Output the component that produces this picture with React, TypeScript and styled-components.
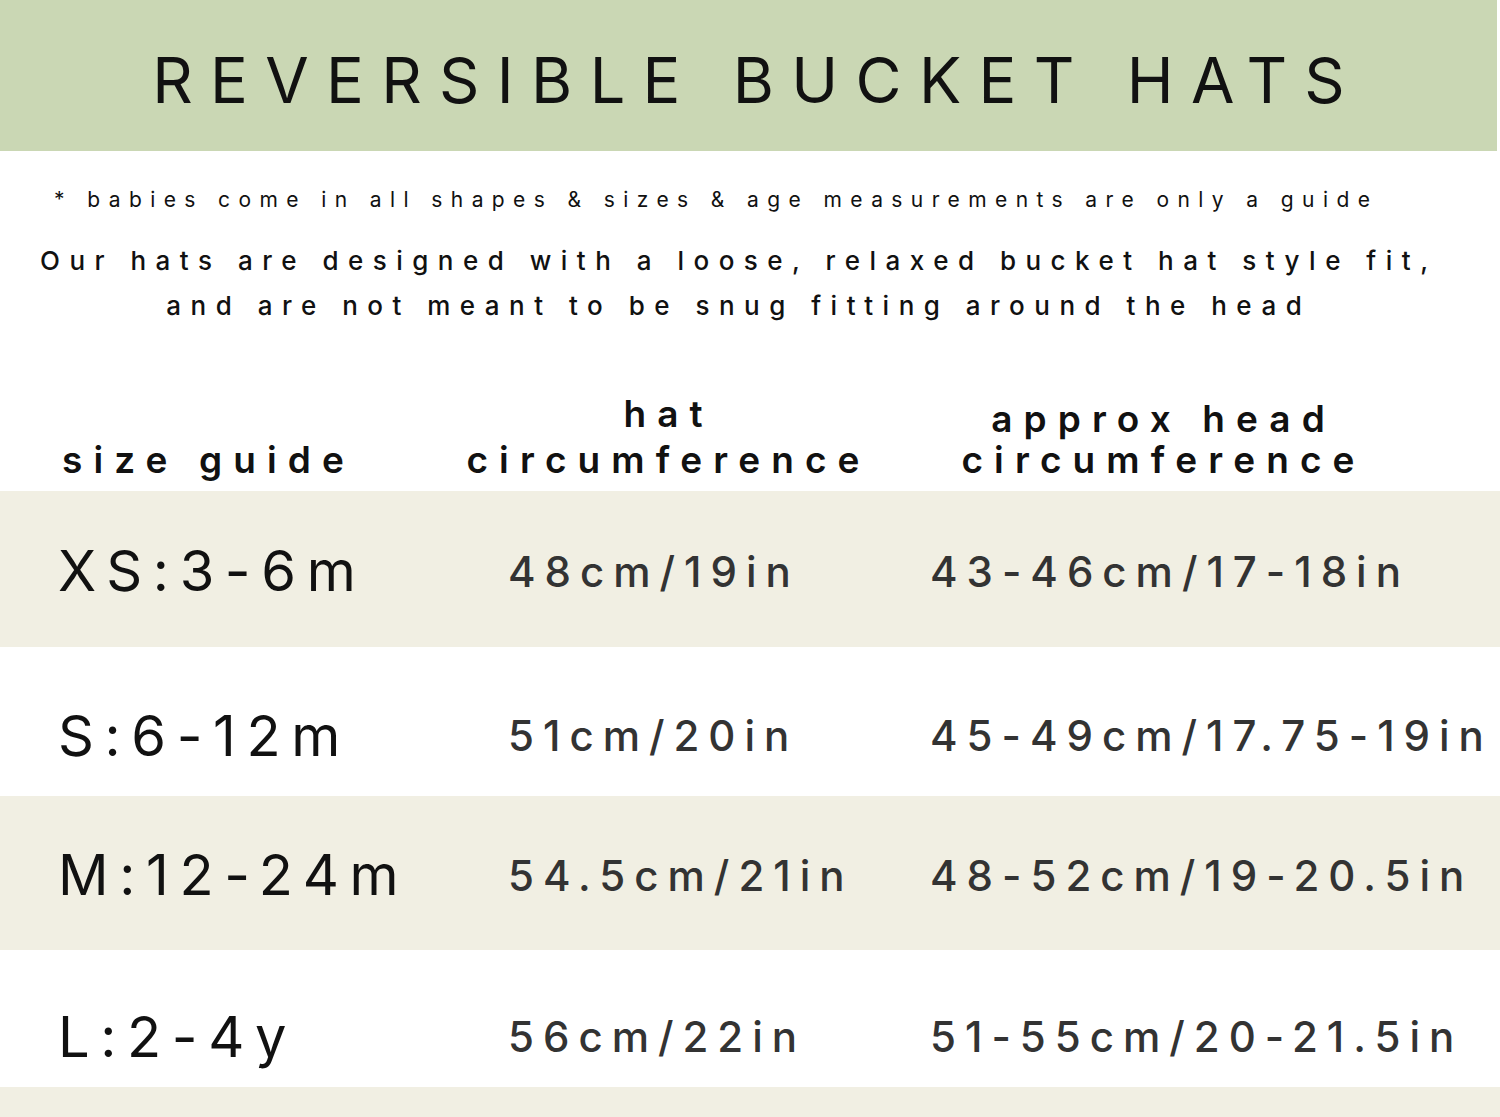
import styled, { createGlobalStyle } from "styled-components";

const GlobalStyle = createGlobalStyle`
  html, body {
    margin: 0;
    padding: 0;
    background: #fff;
  }
  body {
    font-family: Inter, "Noto Sans", "Liberation Sans", sans-serif;
    color: #111;
  }
`;

const rows = [
  { size: "XS:3-6m", hat: "48cm/19in", head: "43-46cm/17-18in", shade: true, h: 156, shift: 2 },
  { size: "S:6-12m", hat: "51cm/20in", head: "45-49cm/17.75-19in", shade: false, h: 149, shift: 14 },
  { size: "M:12-24m", hat: "54.5cm/21in", head: "48-52cm/19-20.5in", shade: true, h: 154, shift: 2 },
  { size: "L:2-4y", hat: "56cm/22in", head: "51-55cm/20-21.5in", shade: false, h: 137, shift: 18 },
];

const App = () => {
  return (
    <Page>
      <GlobalStyle />
      <Banner>
        <h1>REVERSIBLE BUCKET HATS</h1>
      </Banner>
      <Notes>
        <p className="small">* babies come in all shapes &amp; sizes &amp; age measurements are only a guide</p>
        <p className="big">
          Our hats are designed with a loose, relaxed bucket hat style fit,
          <br />
          and are not meant to be snug fitting around the head
        </p>
      </Notes>
      <HeadRow>
        <div className="label">size guide</div>
        <div className="center">
          hat
          <br />
          circumference
        </div>
        <div className="center second">
          <span>approx head</span>
          <br />
          circumference
        </div>
      </HeadRow>
      {rows.map((row) => (
        <SizeRow key={row.size} $shade={row.shade} $h={row.h} $shift={row.shift}>
          <div className="size">{row.size}</div>
          <div className="value">{row.hat}</div>
          <div className="value">{row.head}</div>
        </SizeRow>
      ))}
      <SizeRow $shade $h={30} $shift={0} />
    </Page>
  );
};

export default App;

const Page = styled.div`
  width: 1500px;
  height: 1117px;
  overflow: hidden;
`;

const Banner = styled.header`
  width: 1497px;
  height: 151px;
  background: #cad7b4;
  display: flex;
  align-items: center;
  justify-content: center;

  h1 {
    margin: 8px 0 0 0;
    padding-left: 0.275em;
    font-size: 63px;
    font-weight: 400;
    letter-spacing: 0.275em;
    color: #111;
    white-space: nowrap;
  }
`;

const Notes = styled.div`
  text-align: center;
  padding-top: 34px;
  height: 240px;
  box-sizing: border-box;

  p {
    margin: 0;
    white-space: nowrap;
  }

  .small {
    font-size: 21px;
    letter-spacing: 0.4em;
    padding-left: 0.4em;
    line-height: 30px;
    margin-left: -76px;
  }

  .big {
    margin-top: 23px;
    margin-left: -32px;
    font-size: 26px;
    letter-spacing: 0.365em;
    padding-left: 0.365em;
    line-height: 45px;
    font-weight: 500;
  }
`;

const HeadRow = styled.div`
  display: grid;
  grid-template-columns: 430px 466px 524px;
  align-items: end;
  height: 100px;
  padding-bottom: 8px;
  box-sizing: border-box;
  font-size: 37px;
  font-weight: 600;
  letter-spacing: 0.3em;
  line-height: 46px;
  color: #111;

  .label {
    padding-left: 62px;
  }

  .center {
    text-align: center;
    padding-left: 0.3em;
  }

  .second span {
    position: relative;
    top: 5px;
  }
`;

const SizeRow = styled.div<{ $shade?: boolean; $h: number; $shift: number }>`
  display: grid;
  grid-template-columns: 508px 422px 1fr;
  align-items: center;
  box-sizing: border-box;
  height: ${(p) => p.$h}px;
  padding-top: ${(p) => p.$shift * 2}px;
  background: ${(p) => (p.$shade ? "#f1efe3" : "#fff")};

  .size {
    padding-left: 58px;
    font-size: 56px;
    font-weight: 400;
    letter-spacing: 0.19em;
    color: #111;
  }

  .value {
    font-size: 42px;
    font-weight: 500;
    letter-spacing: 9px;
    color: #333;
    white-space: nowrap;
  }
`;
